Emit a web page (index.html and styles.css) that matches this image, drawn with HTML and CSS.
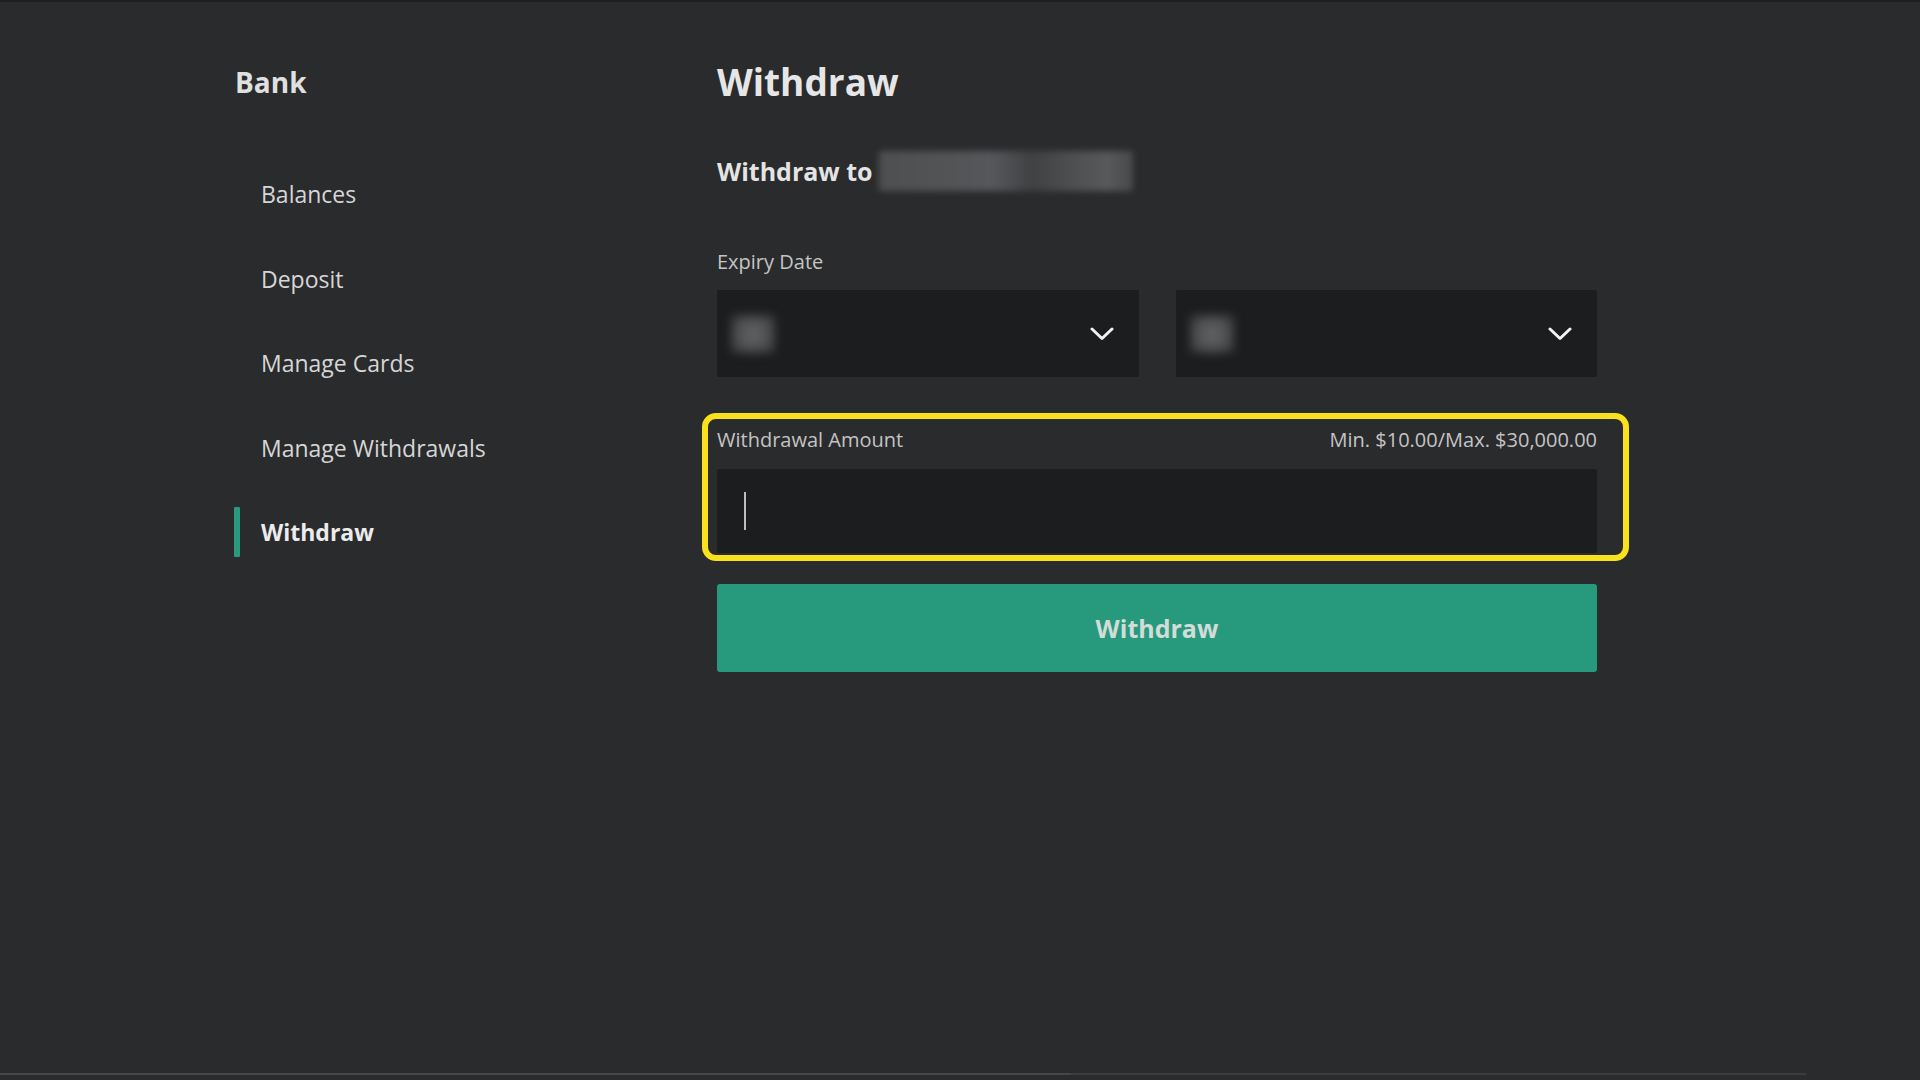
FILE: index.html
```html
<!DOCTYPE html>
<html lang="en">
<head>
    <meta charset="UTF-8">
    <meta name="viewport" content="width=device-width, initial-scale=1.0">
    <title>Bank - Withdraw</title>
    <link rel="stylesheet" href="styles.css">
</head>
<body>
    <div class="top-line"></div>
    <div class="page">
        <nav class="sidebar">
            <div class="brand">Bank</div>
            <ul class="nav">
                <li>Balances</li>
                <li>Deposit</li>
                <li>Manage Cards</li>
                <li>Manage Withdrawals</li>
                <li class="active">Withdraw</li>
            </ul>
        </nav>
        <main class="content">
            <h1>Withdraw</h1>
            <div class="withdraw-to">Withdraw to <span class="blur-card"></span></div>

            <div class="field-label">Expiry Date</div>
            <div class="expiry">
                <div class="select">
                    <span class="blur-val"></span>
                    <svg class="chevron" width="24" height="14" viewBox="0 0 24 14">
                        <path d="M2 2 L12 11.5 L22 2" fill="none" stroke="#f2f2f2" stroke-width="3" stroke-linecap="round" stroke-linejoin="round"/>
                    </svg>
                </div>
                <div class="select">
                    <span class="blur-val"></span>
                    <svg class="chevron" width="24" height="14" viewBox="0 0 24 14">
                        <path d="M2 2 L12 11.5 L22 2" fill="none" stroke="#f2f2f2" stroke-width="3" stroke-linecap="round" stroke-linejoin="round"/>
                    </svg>
                </div>
            </div>

            <div class="amount-field">
                <div class="amount-head">
                    <span>Withdrawal Amount</span>
                    <span>Min. $10.00/Max. $30,000.00</span>
                </div>
                <div class="amount-input"><span class="caret"></span></div>
                <div class="highlight"></div>
            </div>

            <button class="btn-withdraw" type="button">Withdraw</button>
        </main>
    </div>
    <div class="progress"><span class="played"></span></div>
</body>
</html>
```

FILE: styles.css
```css
html, body {
    margin: 0;
    padding: 0;
    height: 100%;
}
body {
    font-family: "Open Sans", "Noto Sans", Arial, sans-serif;
    background-color: #2a2b2d;
    color: #dcdcdc;
    display: flex;
    flex-direction: column;
    overflow: hidden;
}
.top-line {
    height: 2px;
    background-color: #1e1f21;
}
.page {
    flex: 1;
    display: flex;
    padding-top: 57px;
    padding-left: 235px;
}

/* sidebar */
.sidebar {
    width: 482px;
    flex-shrink: 0;
}
.brand {
    font-size: 28px;
    font-weight: 700;
    line-height: 46px;
    color: #e0e0e0;
}
.nav {
    list-style: none;
    margin: 47px 0 0;
    padding: 0;
}
.nav li {
    position: relative;
    height: 84.5px;
    line-height: 84.5px;
    padding-left: 26px;
    font-size: 23px;
    color: #d6d6d6;
}
.nav li.active {
    font-weight: 700;
    color: #ececec;
}
.nav li.active::before {
    content: "";
    position: absolute;
    left: -1px;
    top: 17px;
    width: 6px;
    height: 50px;
    background-color: #2a9a7f;
    border-radius: 1px;
}

/* main column */
.content {
    width: 880px;
}
h1 {
    margin: 0;
    font-size: 37px;
    font-weight: 700;
    line-height: 46px;
    color: #e6e6e6;
}
.withdraw-to {
    display: flex;
    align-items: center;
    margin-top: 49px;
    height: 34px;
    font-size: 25px;
    font-weight: 700;
    color: #e4e4e4;
}
.blur-card {
    display: inline-block;
    width: 254px;
    height: 40px;
    margin-left: 6px;
    background: linear-gradient(90deg, #4d4f50 0%, #55575a 45%, #3f4143 60%, #4c4e50 75%, #57595b 90%, #48494b 100%);
    filter: blur(3px);
}
.field-label {
    margin-top: 62px;
    font-size: 20px;
    line-height: 24px;
    color: #c4c4c4;
}
.expiry {
    display: flex;
    gap: 37px;
    margin-top: 16px;
}
.select {
    flex: 1;
    height: 87px;
    background-color: #1c1d1f;
    border-radius: 2px;
    display: flex;
    align-items: center;
    justify-content: space-between;
    padding: 0 25px 0 14px;
}
.blur-val {
    width: 44px;
    height: 38px;
    background: radial-gradient(circle, #626465 0%, #4a4c4d 60%, #2e3031 100%);
    filter: blur(5px);
}
.chevron {
    display: block;
}

/* amount */
.amount-field {
    position: relative;
    margin-top: 51px;
}
.amount-head {
    display: flex;
    justify-content: space-between;
    font-size: 20px;
    line-height: 24px;
    color: #c4c4c4;
}
.amount-input {
    margin-top: 17px;
    height: 84px;
    background-color: #1c1d1f;
    border-radius: 2px;
    display: flex;
    align-items: center;
    padding-left: 27px;
}
.caret {
    width: 2px;
    height: 38px;
    background-color: #bdbdbd;
}
/* yellow annotation box drawn over the field */
.highlight {
    position: absolute;
    left: -15px;
    top: -15px;
    right: -32px;
    bottom: -8px;
    border: 6px solid #f9e11e;
    border-radius: 14px;
    pointer-events: none;
}

.btn-withdraw {
    display: block;
    width: 100%;
    height: 88px;
    margin-top: 31px;
    border: none;
    border-radius: 3px;
    background-color: #279a7e;
    color: #d3dcd8;
    font-family: inherit;
    font-size: 25px;
    font-weight: 700;
    cursor: pointer;
}

.progress {
    height: 2px;
    width: 1806px;
    margin-bottom: 5px;
    background-color: #3a3c40;
    display: flex;
}
.played {
    width: 1071px;
    background-color: #45474b;
}
```
